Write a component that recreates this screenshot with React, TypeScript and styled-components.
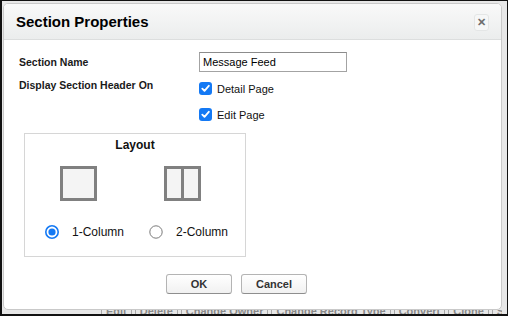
import styled, { createGlobalStyle } from "styled-components"

const GlobalStyle = createGlobalStyle`
    html, body {
        margin: 0;
        padding: 0;
        background: #000;
    }
    body {
        font-family: "Liberation Sans", Arial, sans-serif;
        color: #000;
    }
`

const Frame = styled.div`
    width: 508px;
    height: 316px;
    box-sizing: border-box;
    border-style: solid;
    border-color: #111;
    border-width: 1px 1px 2px 2px;
    background: #e7e7e7;
    padding: 2px 5px 0 1px;
    display: flex;
    flex-direction: column;
    overflow: hidden;
`

const Dialog = styled.div`
    height: 307px;
    flex-shrink: 0;
    box-sizing: border-box;
    background: #fff;
    border: 1px solid #c9c9c9;
    border-radius: 5px;
    display: flex;
    flex-direction: column;
    overflow: hidden;
`

const Header = styled.div`
    height: 36px;
    box-sizing: border-box;
    border-bottom: 1px solid #dcdede;
    background: linear-gradient(#f9f9f9, #ebeded);
    display: flex;
    align-items: center;
    justify-content: space-between;
    padding: 0 12px 0 12px;
`

const Title = styled.h2`
    margin: 0;
    font-size: 15px;
    font-weight: bold;
    color: #000;
`

const CloseButton = styled.div`
    width: 15px;
    height: 17px;
    box-sizing: border-box;
    border: 1px solid #e4e6e6;
    border-radius: 3px;
    background: #f6f7f7;
    display: flex;
    align-items: center;
    justify-content: center;
    color: #6e6e6e;
    font-size: 11px;
    font-weight: bold;
    margin-top: 1px;
`

const Body = styled.div`
    flex: 1;
    padding: 12px 15px 0 15px;
    display: flex;
    flex-direction: column;
`

const FormGrid = styled.div`
    display: grid;
    grid-template-columns: 180px 1fr;
    row-gap: 10px;
`

interface LabelProps {
    offset?: number
}

const Label = styled.div<LabelProps>`
    font-size: 10.5px;
    font-weight: bold;
    color: #1a1a1a;
    line-height: 13px;
    align-self: ${props => props.offset === undefined ? "center" : "start"};
    margin-top: ${props => props.offset ?? 0}px;
`

const TextInput = styled.div`
    width: 148px;
    height: 20px;
    box-sizing: border-box;
    border: 1px solid #a3a3a3;
    border-top-color: #8c8c8c;
    font-size: 11px;
    line-height: 18px;
    padding: 0 3px;
    color: #000;
`

const CheckList = styled.div`
    display: flex;
    flex-direction: column;
    gap: 13px;
`

const CheckRow = styled.label`
    display: flex;
    align-items: center;
    gap: 5px;
    font-size: 11px;
    height: 13px;
    color: #111;
`

const CheckBox = styled.span`
    width: 13px;
    height: 13px;
    border-radius: 3px;
    background: #1479f4;
    display: flex;
    align-items: center;
    justify-content: center;
`

const LayoutBox = styled.div`
    width: 222px;
    height: 124px;
    box-sizing: border-box;
    margin: 12px 0 0 5px;
    border: 1px solid #d6d6d6;
    padding-top: 4px;
    display: flex;
    flex-direction: column;
`

const LayoutTitle = styled.div`
    text-align: center;
    font-size: 12px;
    font-weight: bold;
    line-height: 14px;
    color: #111;
`

const OptionGrid = styled.div`
    display: grid;
    grid-template-columns: 104px 104px;
    padding-left: 20px;
    margin-top: 14px;
`

const Option = styled.div`
    display: flex;
    flex-direction: column;
`

const Thumb = styled.div`
    width: 37px;
    height: 35px;
    box-sizing: border-box;
    margin-left: 15px;
    border: 3px solid #808080;
    background: #f4f4f4;
    display: flex;
`

const ThumbColumn = styled.div`
    flex: 1;
    & + & {
        border-left: 3px solid #808080;
    }
`

const RadioRow = styled.label`
    display: flex;
    align-items: center;
    gap: 13px;
    margin-top: 24px;
    font-size: 12px;
    height: 14px;
    color: #111;
`

const Footer = styled.div`
    display: flex;
    gap: 9px;
    padding-left: 147px;
    margin-top: 17px;
`

const Button = styled.button`
    width: 66px;
    height: 20px;
    box-sizing: border-box;
    border: 1px solid #b4b4b4;
    border-bottom-color: #8e8e8e;
    border-radius: 3px;
    background: linear-gradient(#ffffff, #f1f1f1);
    font-family: "Liberation Sans", Arial, sans-serif;
    font-size: 11px;
    font-weight: bold;
    color: #333;
    padding: 0;
`

const PageStrip = styled.div`
    height: 4px;
    overflow: hidden;
    display: flex;
    gap: 3px;
    padding-left: 98px;
`

const PageButton = styled.span`
    flex-shrink: 0;
    margin-top: -6px;
    padding: 0 4px;
    border-left: 1px solid #a8a8a8;
    border-right: 1px solid #a8a8a8;
    font-size: 11px;
    font-weight: bold;
    line-height: 14px;
    color: #8a8a8a;
    white-space: nowrap;
`

function Check() {
    return (
        <CheckBox>
            <svg width="9" height="9" viewBox="0 0 9 9">
                <path d="M1.3 4.6 L3.5 6.9 L7.8 1.8" fill="none" stroke="#fff" strokeWidth="1.8" strokeLinecap="round" strokeLinejoin="round" />
            </svg>
        </CheckBox>
    )
}

function Radio({ checked }: { checked: boolean }) {
    return (
        <svg width="14" height="14" viewBox="0 0 14 14">
            <circle cx="7" cy="7" r="6.2" fill="#fff" stroke={checked ? "#1479f4" : "#7a7a7a"} strokeWidth={checked ? 1.6 : 1} />
            {checked && <circle cx="7" cy="7" r="3.6" fill="#1479f4" />}
        </svg>
    )
}

const pageButtons = ["Edit", "Delete", "Change Owner", "Change Record Type", "Convert", "Clone", "Sharing"]

export default function App(): JSX.Element {
    return (
        <>
            <GlobalStyle />
            <Frame>
                <Dialog>
                    <Header>
                        <Title>Section Properties</Title>
                        <CloseButton>✕</CloseButton>
                    </Header>
                    <Body>
                        <FormGrid>
                            <Label>Section Name</Label>
                            <TextInput>Message Feed</TextInput>
                            <Label offset={-3}>Display Section Header On</Label>
                            <CheckList>
                                <CheckRow><Check />Detail Page</CheckRow>
                                <CheckRow><Check />Edit Page</CheckRow>
                            </CheckList>
                        </FormGrid>
                        <LayoutBox>
                            <LayoutTitle>Layout</LayoutTitle>
                            <OptionGrid>
                                <Option>
                                    <Thumb><ThumbColumn /></Thumb>
                                    <RadioRow><Radio checked />1-Column</RadioRow>
                                </Option>
                                <Option>
                                    <Thumb><ThumbColumn /><ThumbColumn /></Thumb>
                                    <RadioRow><Radio checked={false} />2-Column</RadioRow>
                                </Option>
                            </OptionGrid>
                        </LayoutBox>
                        <Footer>
                            <Button>OK</Button>
                            <Button>Cancel</Button>
                        </Footer>
                    </Body>
                </Dialog>
                <PageStrip>
                    {pageButtons.map(b => <PageButton key={b}>{b}</PageButton>)}
                </PageStrip>
            </Frame>
        </>
    )
}
